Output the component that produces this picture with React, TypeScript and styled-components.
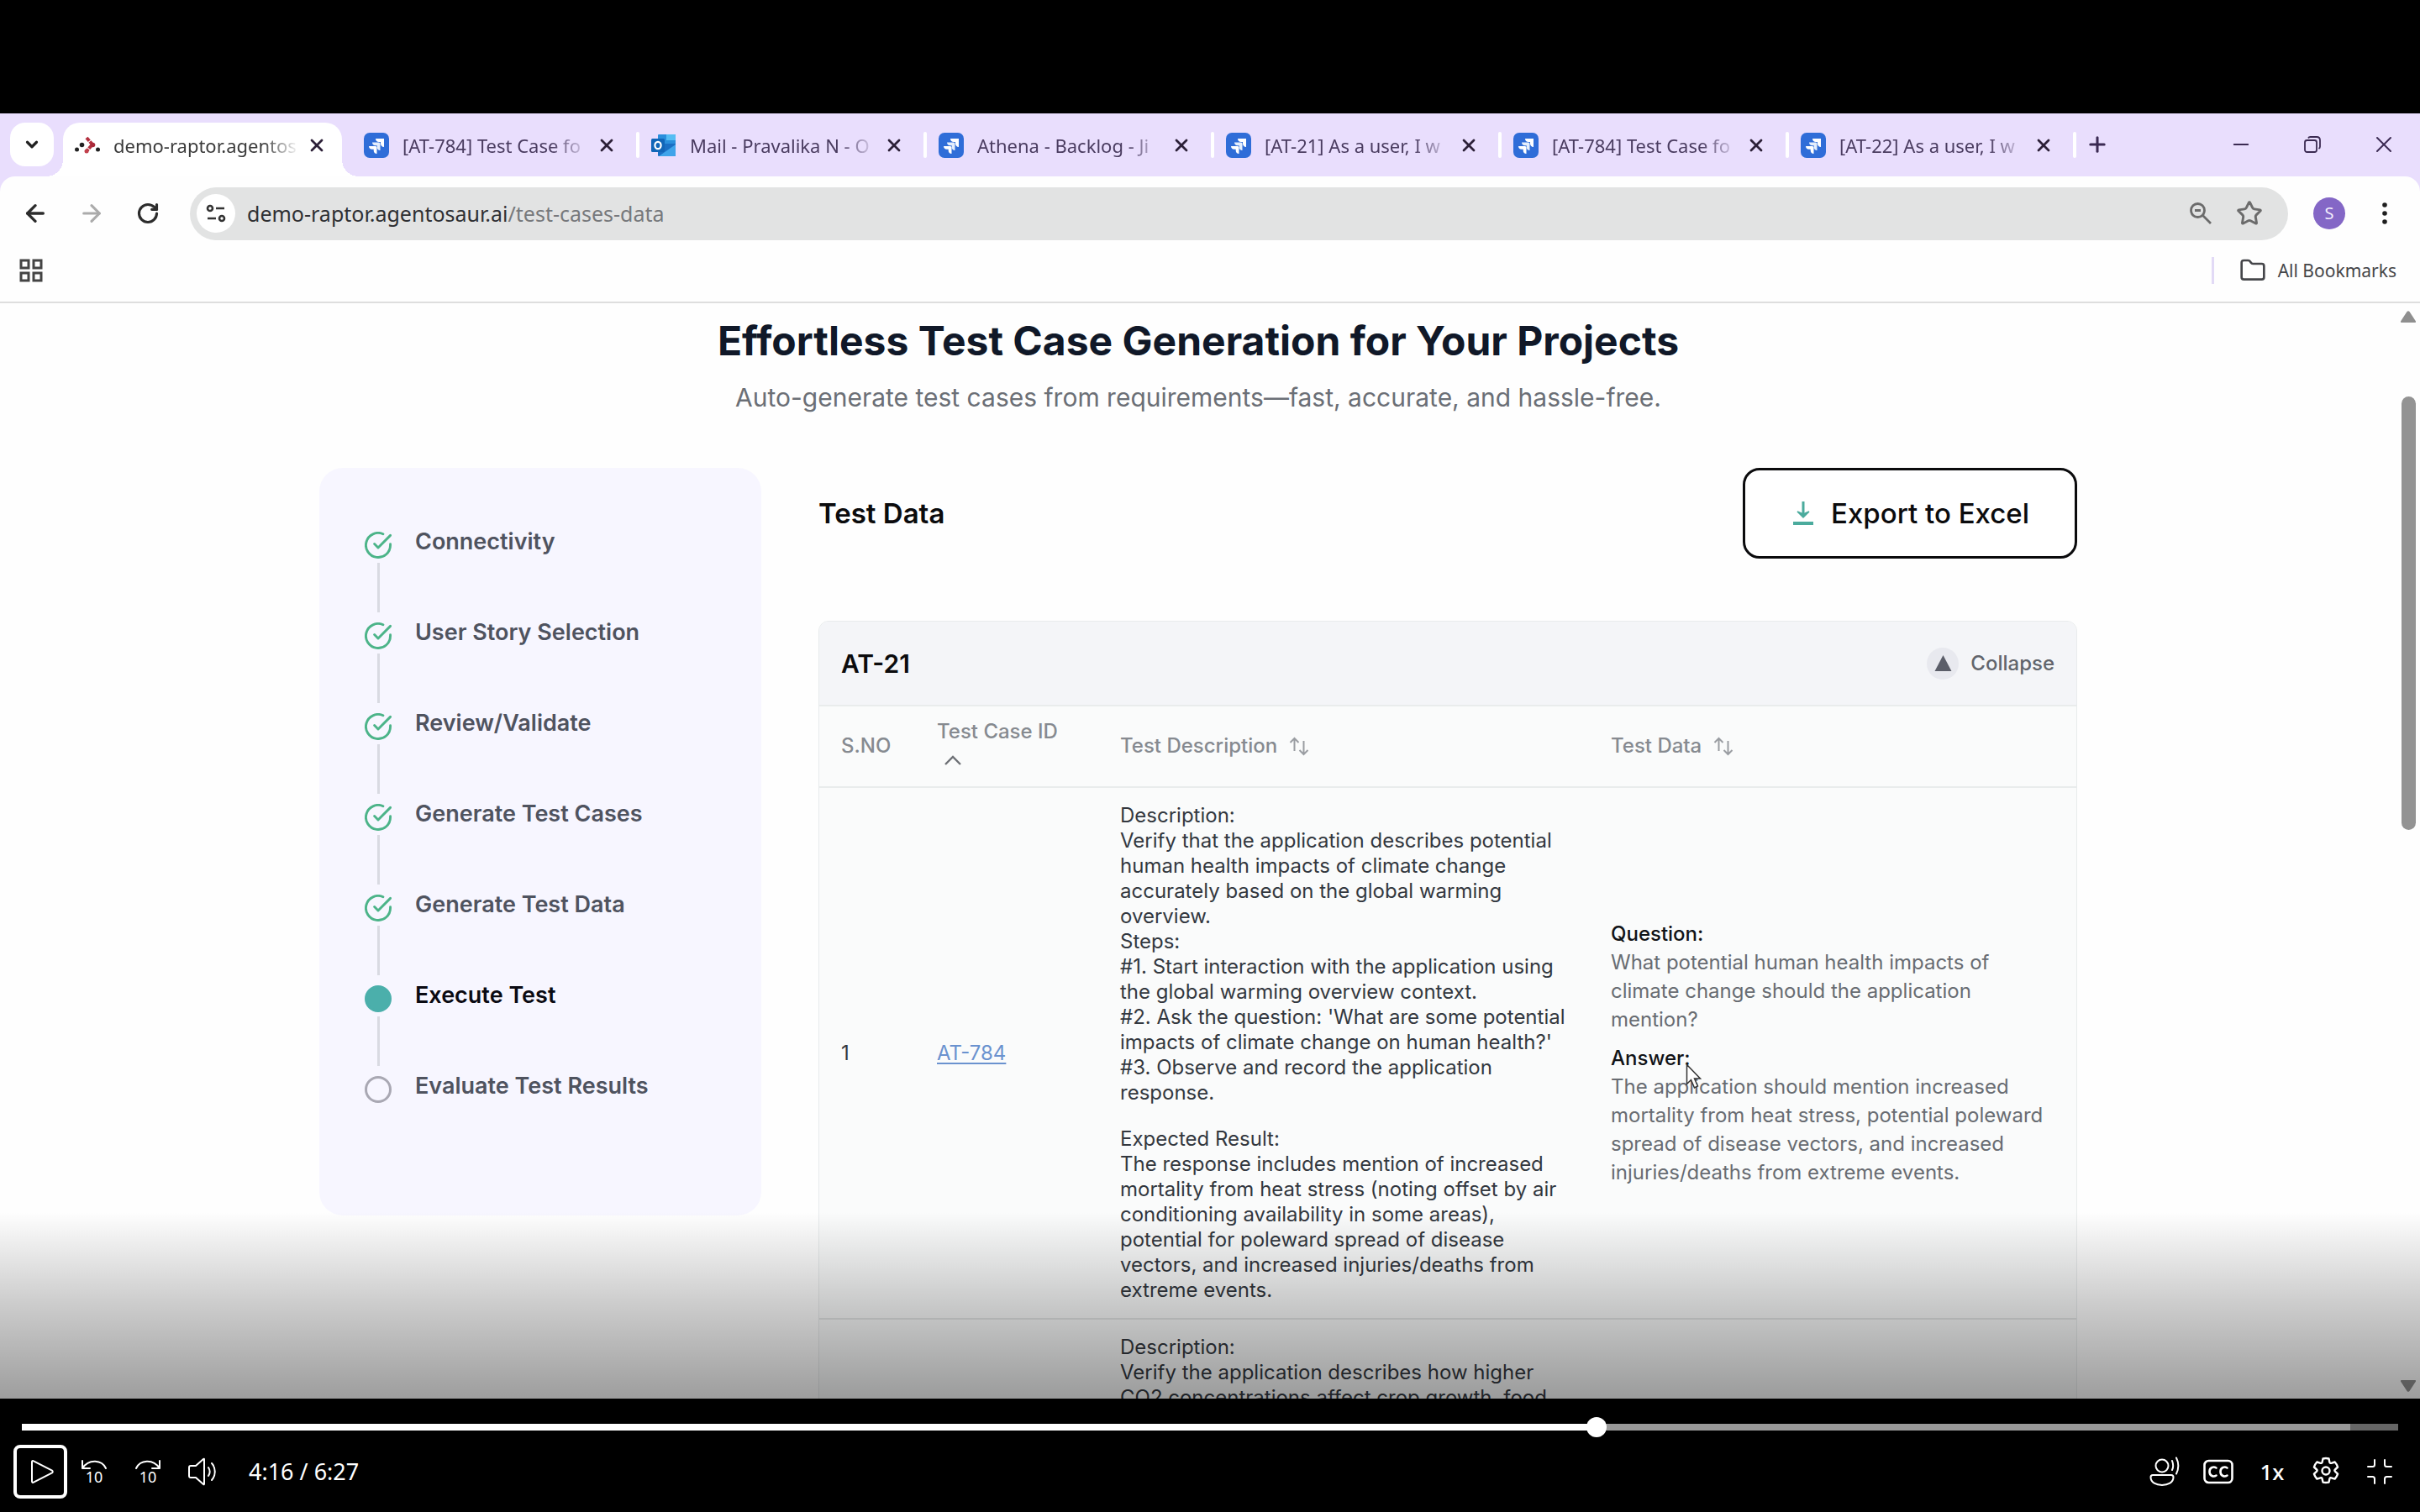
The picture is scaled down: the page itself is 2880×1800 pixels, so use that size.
import React from "react";
import styled, { createGlobalStyle } from "styled-components";
import { ArrowLeft, ArrowRight, RotateCw, ChevronDown, Plus, X, Minus, Star, Folder } from "lucide-react";

const UI_FONT = `"Inter", "Liberation Sans", sans-serif`;
const CHROME_FONT = `"Noto Sans", "Open Sans", sans-serif`;

const GlobalStyle = createGlobalStyle`
  * { box-sizing: border-box; }
  body { margin: 0; background: #000; }
  button { border: 0; padding: 0; margin: 0; background: none; font: inherit; color: inherit; cursor: pointer; }
  svg { display: block; flex: none; }
  h1, h2, h3, p, ol { margin: 0; padding: 0; }
`;

/* ---------- player ---------- */

const Player = styled.div`
  display: flex;
  flex-direction: column;
  height: 100vh;
  padding-top: 135px;
  background: #000;
`;

const Recording = styled.div`
  flex: 1;
  min-height: 0;
  display: flex;
  flex-direction: column;
  position: relative;
  background: #e9defd;
`;

const Shade = styled.div`
  position: absolute;
  left: 0;
  right: 0;
  bottom: 0;
  height: 222px;
  background: linear-gradient(to bottom, rgba(0, 0, 0, 0), rgba(0, 0, 0, 0.2) 50%, rgba(0, 0, 0, 0.38));
  pointer-events: none;
`;

/* ---------- browser chrome ---------- */

const TabStrip = styled.div`
  display: flex;
  align-items: flex-end;
  height: 75px;
  padding-left: 12px;
  color: #3b2a52;
  font-family: ${CHROME_FONT};
`;

const TabSearch = styled.button`
  display: grid;
  place-items: center;
  width: 52px;
  height: 52px;
  margin: 0 11px 12px 0;
  border-radius: 18px;
  background: #fff;
  color: #222;
`;

const Tab = styled.div<{ $active?: boolean }>`
  position: relative;
  flex: none;
  display: flex;
  align-items: center;
  gap: 16px;
  width: ${(p) => (p.$active ? 332 : 342)}px;
  height: 64px;
  margin-right: ${(p) => (p.$active ? 10 : 0)}px;
  padding: 0 ${(p) => (p.$active ? 17 : 24)}px 10px ${(p) => (p.$active ? 14 : 16)}px;
  border-radius: 20px 20px 0 0;
  background: ${(p) => (p.$active ? "#fff" : "transparent")};
  color: ${(p) => (p.$active ? "#3a3a3a" : "#4a3c60")};

  &::before,
  &::after {
    content: "";
    position: absolute;
    display: ${(p) => (p.$active ? "block" : "none")};
    bottom: 0;
    width: 20px;
    height: 20px;
  }
  &::before {
    left: -20px;
    background: radial-gradient(circle at 0 0, transparent 20px, #fff 20px);
  }
  &::after {
    right: -20px;
    background: radial-gradient(circle at 100% 0, transparent 20px, #fff 20px);
  }
`;

const TabTitle = styled.button`
  flex: 1;
  min-width: 0;
  margin-right: -8px;
  overflow: hidden;
  white-space: nowrap;
  text-align: left;
  font-size: 22px;
  line-height: 32px;
  mask-image: linear-gradient(to right, #000 80%, transparent);
`;

const TabClose = styled.button`
  display: grid;
  place-items: center;
  width: 26px;
  height: 26px;
  color: #2c2038;
`;

const TabDivider = styled.span`
  position: absolute;
  right: -2px;
  top: 11px;
  width: 4px;
  height: 31px;
  border-radius: 2px;
  background: #fff;
`;

const NewTab = styled.button`
  display: grid;
  place-items: center;
  width: 36px;
  height: 36px;
  margin: 0 0 20px 9px;
`;

const WindowButtons = styled.div`
  display: flex;
  align-items: center;
  gap: 53px;
  height: 36px;
  margin: 0 27px 20px auto;
`;

const WindowButton = styled.button`
  display: grid;
  place-items: center;
  width: 32px;
  height: 32px;
`;

const Toolbar = styled.div`
  display: flex;
  align-items: center;
  height: 88px;
  padding: 0 38px 0 24px;
  border-radius: 18px 18px 0 0;
  background: #fefefe;
  font-family: ${CHROME_FONT};
`;

const NavButtons = styled.div`
  display: flex;
  gap: 35px;
  padding: 0 34px 0 2px;
`;

const NavButton = styled.button<{ $muted?: boolean }>`
  display: grid;
  place-items: center;
  width: 32px;
  height: 32px;
  color: ${(p) => (p.$muted ? "#ababab" : "#2c2c2c")};
`;

const AddressBar = styled.div`
  flex: 1;
  display: flex;
  align-items: center;
  height: 63px;
  padding: 0 30px 0 8px;
  border-radius: 32px;
  background: #e2e3e3;
  color: #6b6b6b;
`;

const SiteInfo = styled.button`
  display: grid;
  place-items: center;
  width: 46px;
  height: 46px;
  margin-right: 14px;
  border-radius: 50%;
  background: #fff;
  color: #333;
`;

const Host = styled.label`
  font-size: 25px;
  line-height: 36px;
  color: #2f3033;
`;

const Path = styled.input`
  flex: 1;
  min-width: 0;
  height: 36px;
  padding: 0;
  border: 0;
  outline: 0;
  background: none;
  font-family: inherit;
  font-size: 25px;
  line-height: 36px;
  color: #77797c;
`;

const AddressActions = styled.div`
  display: flex;
  gap: 28px;
`;

const Avatar = styled.button`
  width: 38px;
  height: 38px;
  margin: 0 43px 0 30px;
  border-radius: 50%;
  background: #8467c6;
  color: #f3eefc;
  font-size: 20px;
  line-height: 38px;
`;

const Bookmarks = styled.div`
  display: flex;
  align-items: center;
  justify-content: space-between;
  height: 63px;
  padding: 0 28px 13px 23px;
  border-bottom: 2px solid #dedede;
  background: #fefefe;
  font-family: ${CHROME_FONT};
`;

const AllBookmarks = styled.button`
  display: flex;
  align-items: center;
  gap: 14px;
  padding-left: 30px;
  border-left: 3px solid #e2daf6;
  font-size: 21px;
  line-height: 30px;
  color: #45464a;
`;

/* ---------- page ---------- */

const Viewport = styled.div`
  flex: 1;
  min-height: 0;
  display: flex;
  background: #fefefe;
  font-family: ${UI_FONT};
`;

const Scroller = styled.div`
  flex: 1;
  min-width: 0;
  overflow: hidden;
`;

const ScrollRail = styled.div`
  display: flex;
  flex-direction: column;
  align-items: center;
  width: 28px;
  padding: 9px 0 8px;
`;

const RailSpace = styled.div<{ $grow: number }>`
  flex: ${(p) => p.$grow} 0 0;
`;

const RailThumb = styled.div`
  flex: 41 0 0;
  width: 17px;
  border-radius: 9px;
  background: #939393;
`;

const Page = styled.main`
  width: 100%;
  max-width: 2092px;
  margin: 0 auto;
  padding-top: 15px;
`;

const Intro = styled.header`
  display: flex;
  flex-direction: column;
  gap: 19px;
  margin-bottom: 66px;
  text-align: center;
`;

const Title = styled.h1`
  font-size: 48px;
  line-height: 60px;
  font-weight: 700;
  color: #101828;
`;

const Subtitle = styled.p`
  font-size: 30px;
  line-height: 36px;
  color: #6b6f76;
`;

const Columns = styled.div`
  display: grid;
  grid-template-columns: 526px minmax(0, 1fr);
  gap: 68px;
  align-items: start;
`;

const Steps = styled.ol`
  list-style: none;
  padding: 76px 54px 134px;
  border-radius: 28px;
  background: #f7f6ff;
`;

const Step = styled.li<{ $last?: boolean }>`
  display: flex;
  gap: 28px;
  height: ${(p) => (p.$last ? 32 : 108)}px;
`;

const StepRail = styled.div`
  display: flex;
  flex-direction: column;
  align-items: center;
  width: 32px;
`;

const Connector = styled.span`
  flex: 1;
  width: 3px;
  margin: 5px 0 12px;
  background: #d9dae2;
`;

const StepLabel = styled.span<{ $current?: boolean }>`
  font-size: 27px;
  line-height: 24px;
  font-weight: 600;
  color: ${(p) => (p.$current ? "#0a0a12" : "#4f535f")};
`;

const Dot = styled.span<{ $filled?: boolean }>`
  width: 32px;
  height: 32px;
  border-radius: 50%;
  border: 3px solid ${(p) => (p.$filled ? "#4bafab" : "#a9a8b3")};
  background: ${(p) => (p.$filled ? "#4bafab" : "transparent")};
`;

const PanelTop = styled.div`
  display: flex;
  align-items: center;
  justify-content: space-between;
  margin-bottom: 74px;
`;

const PanelTitle = styled.h2`
  font-size: 33px;
  line-height: 40px;
  font-weight: 600;
  color: #0b0b0d;
`;

const ExportButton = styled.button`
  display: flex;
  align-items: center;
  gap: 20px;
  height: 108px;
  padding: 0 54px 0 56px;
  border: 3px solid #0b0b0d;
  border-radius: 20px;
  background: #fff;
  font-size: 33px;
  line-height: 40px;
  font-weight: 500;
  color: #0b0b0d;
`;

const Card = styled.section`
  border: 1px solid #e8ebec;
  border-radius: 12px;
  background: #fafbfb;
  overflow: hidden;
`;

const CardHead = styled.div`
  display: flex;
  align-items: center;
  justify-content: space-between;
  height: 101px;
  padding: 0 26px;
  border-bottom: 2px solid #e9ecec;
  background: #f4f5f8;
`;

const CardTitle = styled.h3`
  font-size: 30px;
  line-height: 36px;
  font-weight: 600;
  color: #0b0b0d;
`;

const CollapseButton = styled.button`
  display: flex;
  align-items: center;
  gap: 14px;
  font-size: 24px;
  line-height: 30px;
  font-weight: 500;
  color: #62656c;
`;

const CollapseIcon = styled.span`
  display: grid;
  place-items: center;
  width: 38px;
  height: 38px;
  border-radius: 50%;
  background: #e8e9ef;
`;

const Table = styled.table`
  width: 100%;
  table-layout: fixed;
  border-collapse: collapse;
  font-size: 24px;
`;

const Col = styled.col<{ $width?: number }>`
  width: ${(p) => (p.$width ? `${p.$width}px` : "auto")};
`;

const Th = styled.th`
  height: 96px;
  padding: 11px 0 12px 26px;
  border-bottom: 2px solid #e9ecec;
  text-align: left;
  font-weight: 500;
  line-height: 34px;
  color: #868a90;
`;

const SortButton = styled.button<{ $stacked?: boolean }>`
  display: flex;
  flex-direction: ${(p) => (p.$stacked ? "column" : "row")};
  align-items: ${(p) => (p.$stacked ? "flex-start" : "center")};
  gap: ${(p) => (p.$stacked ? 0 : 14)}px;
`;

const SortedMark = styled.span`
  display: flex;
  align-items: center;
  height: 34px;
  padding-left: 9px;
`;

const Td = styled.td`
  padding: 18px 20px 18px 26px;
  border-bottom: 2px solid #e3e6e6;
  vertical-align: middle;
  line-height: 30px;
  color: #33383f;
`;

const CaseLink = styled.a`
  color: #6a92cf;
  text-underline-offset: 3px;
`;

const Block = styled.p`
  white-space: pre-line;
  & + & {
    margin-top: 25px;
  }
`;

const DataBlock = styled.div`
  line-height: 34px;
  color: #686c72;
  & + & {
    margin-top: 12px;
  }
`;

const DataLabel = styled.p`
  position: relative;
  font-weight: 500;
  color: #111317;
`;

const Pointer = styled.svg`
  position: absolute;
  left: 89px;
  top: 23px;
`;

/* ---------- player controls ---------- */

const Controls = styled.div`
  height: 135px;
  padding: 22px 16px 16px;
  font-family: ${CHROME_FONT};
  color: #fff;
`;

const Seek = styled.input`
  appearance: none;
  display: block;
  width: calc(100% - 20px);
  height: 24px;
  margin: 0 10px 9px;
  background: linear-gradient(to right, #fff 0 66%, #999 66% 98%, #666 98%) center / 100% 8px no-repeat;
  &::-webkit-slider-thumb {
    appearance: none;
    width: 24px;
    height: 24px;
    border-radius: 50%;
    background: #fff;
  }
`;

const ControlRow = styled.div`
  display: flex;
  align-items: center;
  justify-content: space-between;
`;

const ControlGroup = styled.div`
  display: flex;
  align-items: center;
`;

const ControlButton = styled.button<{ $focused?: boolean }>`
  display: grid;
  place-items: center;
  width: 64px;
  height: 64px;
  border: ${(p) => (p.$focused ? "4px solid #fff" : "0")};
  border-radius: 8px;
  font-size: 26px;
  line-height: 32px;
  font-weight: 500;
`;

const Time = styled.span`
  margin-left: 24px;
  font-size: 27px;
  line-height: 36px;
`;

/* ---------- drawings ---------- */

const RaptorIcon = () => (
  <svg width="30" height="30" viewBox="0 0 30 30">
    <circle cx="2.5" cy="20" r="2.5" fill="#222" />
    <circle cx="8.5" cy="14.5" r="2.8" fill="#222" />
    <path d="M14 6l7 8-7 8" fill="none" stroke="#b3303f" strokeWidth="4" strokeDasharray="5 1" />
    <circle cx="14" cy="22" r="2.5" fill="#c2404c" />
    <circle cx="21.5" cy="14.5" r="2.8" fill="#a92a3a" />
    <circle cx="27.5" cy="20" r="2.5" fill="#222" />
  </svg>
);

const JiraIcon = () => (
  <svg width="30" height="30" viewBox="0 0 30 30">
    <rect width="30" height="30" rx="7" fill="#2f6dd8" />
    <path d="M14 7h10v10c-2.400 0-4-1.700-4-4v-2h-2c-2.300 0-4-1.600-4-4z" fill="#fff" />
    <path d="M10 11.500h8c.7 0 1.500.8 1.500 1.500v8c-2.300 0-3.800-1.500-3.800-3.800V15.300h-1.900c-2.300 0-3.800-1.500-3.800-3.800z" fill="#e4eefc" />
    <path d="M6 16h8c.7 0 1.500.8 1.500 1.500v7.500c-2.300 0-3.800-1.500-3.800-3.800v-1.400H9.800C7.500 19.800 6 18.300 6 16z" fill="#fff" />
  </svg>
);

const OutlookIcon = () => (
  <svg width="30" height="30" viewBox="0 0 30 30">
    <path d="M9 2h19a1 1 0 0 1 1 1v12H8V3a1 1 0 0 1 1-1z" fill="#2a8fdc" />
    <path d="M18 2h10a1 1 0 0 1 1 1v6H18z" fill="#55bdf3" />
    <path d="M8 13l21 0v14a1 1 0 0 1-1 1H9a1 1 0 0 1-1-1z" fill="#1a6fc4" />
    <path d="M29 14L9 28h19a1 1 0 0 0 1-1z" fill="#3fa4ea" />
    <rect y="7" width="16" height="16" rx="1.500" fill="#1166b8" />
    <ellipse cx="8" cy="15" rx="3.600" ry="4.200" fill="none" stroke="#fff" strokeWidth="2.200" />
  </svg>
);

const RestoreIcon = () => (
  <svg width="20" height="20" viewBox="0 0 20 20" fill="none" stroke="currentColor" strokeWidth="1.800">
    <rect x="1" y="5" width="14" height="14" rx="2.500" />
    <path d="M5 2.500C5.500 1.500 6.300 1 7.500 1H15c2.500 0 4 1.500 4 4v7.500c0 1.200-.5 2-1.500 2.500" />
  </svg>
);

const TuneIcon = () => (
  <svg width="24" height="24" viewBox="0 0 24 24" fill="none" stroke="currentColor" strokeWidth="2.600">
    <circle cx="5" cy="6" r="3" />
    <path d="M12 6h10M2 18h10" />
    <circle cx="19" cy="18" r="3" />
  </svg>
);

const ZoomOutIcon = () => (
  <svg width="28" height="28" viewBox="0 0 28 28" fill="none" stroke="currentColor" strokeWidth="2.800">
    <circle cx="10.500" cy="10.500" r="8" />
    <path d="M16.500 16.500L26 26M7 10.500h7" />
  </svg>
);

const MoreIcon = () => (
  <svg width="8" height="28" viewBox="0 0 8 28" fill="#1f1f1f">
    <circle cx="4" cy="4" r="2.800" />
    <circle cx="4" cy="14" r="2.800" />
    <circle cx="4" cy="24" r="2.800" />
  </svg>
);

const AppsIcon = () => (
  <svg width="28" height="28" viewBox="0 0 28 28" fill="none" stroke="#444" strokeWidth="3">
    <rect x="2" y="2" width="9" height="9" />
    <rect x="17" y="2" width="9" height="9" />
    <rect x="2" y="17" width="9" height="9" />
    <rect x="17" y="17" width="9" height="9" />
  </svg>
);

const TriangleUp = ({ size, color }: { size: number; color: string }) => (
  <svg width={size} height={size} viewBox="0 0 20 20">
    <path d="M10 1L19.500 19H.5z" fill={color} />
  </svg>
);

const RailArrow = ({ down }: { down?: boolean }) => (
  <svg width="18" height="14" viewBox="0 0 18 14">
    <path d={down ? "M1 0h16a1 1 0 0 1 1 1.500L10.500 13a2 2 0 0 1-3 0L0 1.500A1 1 0 0 1 1 0z" : "M1 14h16a1 1 0 0 0 1-1.500L10.500 1a2 2 0 0 0-3 0L0 12.500A1 1 0 0 0 1 14z"} fill="#8f8f8f" />
  </svg>
);

const DoneIcon = () => (
  <svg width="32" height="32" viewBox="1 1 22 22" fill="none" stroke="#4cb489" strokeWidth="2" strokeLinecap="round" strokeLinejoin="round">
    <path d="M22 11.080V12a10 10 0 1 1-5.930-9.140" />
    <path d="M22 4L12 14.010l-3-3" />
  </svg>
);

const DownloadIcon = () => (
  <svg width="26" height="30" viewBox="0 0 26 30" fill="none" stroke="#4bab9d" strokeWidth="3">
    <path d="M13 1v18" />
    <path d="M6 13l7 7 7-7-7 3z" fill="#4bab9d" strokeWidth="1.500" />
    <path d="M1 27h24" strokeWidth="4" />
  </svg>
);

const SortIcon = () => (
  <svg width="24" height="24" viewBox="0 0 24 24" fill="none" stroke="#9a9da2" strokeWidth="2">
    <path d="M6.500 18V3M1.500 8l5-5 5 5M17.500 6v16M12.500 17l5 5 5-5" />
  </svg>
);

const SortedIcon = () => (
  <svg width="20" height="12" viewBox="0 0 20 12" fill="none" stroke="#6d7075" strokeWidth="2.400">
    <path d="M1 11l9-9 9 9" />
  </svg>
);

const ctl = { fill: "none", stroke: "currentColor", strokeWidth: 2, strokeLinecap: "round", strokeLinejoin: "round" } as const;

const PlayIcon = () => (
  <svg width="32" height="32" viewBox="0 0 32 32" {...ctl}>
    <path d="M6 4.500v23c0 1.200 1 1.800 2 1.200l22-11.400c1-.6 1-2 0-2.600L8 3.300c-1-.6-2 0-2 1.200z" />
  </svg>
);

const SkipText = styled.text`
  font-family: ${CHROME_FONT};
  font-size: 18px;
  font-weight: 400;
  fill: currentColor;
  stroke: none;
`;

const SkipIcon = ({ forward }: { forward?: boolean }) => (
  <svg width="32" height="32" viewBox="0 0 32 32" {...ctl}>
    <path d={forward ? "M30 3v9h-9M2 12C6.500 2 22 0 30 12" : "M2 3v9h9M30 12C25.500 2 10 0 2 12"} />
    <SkipText x="16" y="29" textAnchor="middle">10</SkipText>
  </svg>
);

const VolumeIcon = () => (
  <svg width="34" height="34" viewBox="0 0 34 34" {...ctl}>
    <path d="M2 12c0-1.500.7-2 2-2h6l9-8c.6-.5 1-.3 1 .5v29c0 .8-.4 1-1 .5l-9-8H4c-1.300 0-2-.5-2-2z" />
    <path d="M25 12c2 3 2 7 0 10M29 7c5 5.500 5 14.500 0 20" />
  </svg>
);

const SpeakerIcon = () => (
  <svg width="36" height="36" viewBox="0 0 36 36" {...ctl}>
    <circle cx="15" cy="11" r="7.500" />
    <path d="M4 22h22c1.500 0 2.500 1 2.500 2.500C28.500 31 22 34 15 34S1.500 31 1.500 24.500C1.500 23 2.500 22 4 22z" />
    <path d="M27 5c1.500 4 1.500 8 0 11M32 1.500c3.200 6.500 3.200 12.500 0 19" />
  </svg>
);

const CaptionsIcon = () => (
  <svg width="36" height="30" viewBox="0 0 36 30" {...ctl} strokeWidth={2.6}>
    <rect x="1.500" y="2" width="33" height="26" rx="5" />
    <path d="M15.500 10.500c-3-2-8-1-8 4.500s5 6.500 8 4.500M28.500 10.500c-3-2-8-1-8 4.500s5 6.500 8 4.500" />
  </svg>
);

const GearIcon = () => (
  <svg width="34" height="36" viewBox="0 -1 34 36" {...ctl} strokeWidth={2.4}>
    <path d="M13.500 1.500c2.300-.6 4.700-.6 7 0l.9 4.200c.2.900 1.100 1.400 2 1.100l4.200-1.300c1.600 1.700 2.800 3.700 3.500 6l-3.200 3c-.7.600-.7 1.500 0 2.100l3.200 3c-.7 2.300-1.900 4.300-3.500 6l-4.200-1.300c-.9-.3-1.800.2-2 1.100l-.9 4.200c-2.300.6-4.700.6-7 0l-.9-4.200c-.2-.9-1.100-1.400-2-1.100l-4.200 1.300c-1.600-1.700-2.800-3.700-3.500-6l3.200-3c.7-.6.7-1.500 0-2.100l-3.200-3c.7-2.300 1.900-4.300 3.500-6l4.200 1.300c.9.300 1.800-.2 2-1.100z" />
    <circle cx="17" cy="16" r="4.500" />
  </svg>
);

const ExitFullIcon = () => (
  <svg width="32" height="32" viewBox="0 0 32 32" {...ctl}>
    <path d="M2 10h5.500c1.500 0 2.500-1 2.500-2.500V2M30 10h-5.500c-1.500 0-2.500-1-2.500-2.500V2M2 22h5.500c1.500 0 2.500 1 2.500 2.500V30M30 22h-5.500c-1.500 0-2.500 1-2.500 2.500V30" />
  </svg>
);

/* ---------- data ---------- */

const TABS = [
  { icon: <RaptorIcon />, title: "demo-raptor.agentos", active: true },
  { icon: <JiraIcon />, title: "[AT-784] Test Case fo" },
  { icon: <OutlookIcon />, title: "Mail - Pravalika N - O" },
  { icon: <JiraIcon />, title: "Athena - Backlog - Ji" },
  { icon: <JiraIcon />, title: "[AT-21] As a user, I w" },
  { icon: <JiraIcon />, title: "[AT-784] Test Case fo" },
  { icon: <JiraIcon />, title: "[AT-22] As a user, I w" },
];

const STEPS = [
  { label: "Connectivity", state: "done" },
  { label: "User Story Selection", state: "done" },
  { label: "Review/Validate", state: "done" },
  { label: "Generate Test Cases", state: "done" },
  { label: "Generate Test Data", state: "done" },
  { label: "Execute Test", state: "current" },
  { label: "Evaluate Test Results", state: "todo" },
];

const DESCRIPTION = `Description:
Verify that the application describes potential human health impacts of climate change accurately based on the global warming overview.
Steps:
#1. Start interaction with the application using the global warming overview context.
#2. Ask the question: 'What are some potential impacts of climate change on human health?'
#3. Observe and record the application response.`;

const EXPECTED = `Expected Result:
The response includes mention of increased mortality from heat stress (noting offset by air conditioning availability in some areas), potential for poleward spread of disease vectors, and increased injuries/deaths from extreme events.`;

const NEXT_DESCRIPTION = `Description:
Verify the application describes how higher CO2 concentrations affect crop growth, food`;

export default function App() {
  return (
    <Player>
      <GlobalStyle />
      <Recording>
        <TabStrip>
          <TabSearch aria-label="Search tabs"><ChevronDown size={22} strokeWidth={3.5} /></TabSearch>
          {TABS.map((t, i) => (
            <Tab key={i} $active={t.active}>
              {t.icon}
              <TabTitle>{t.title}</TabTitle>
              <TabClose aria-label="Close tab"><X size={24} strokeWidth={2.8} /></TabClose>
              {!t.active && <TabDivider />}
            </Tab>
          ))}
          <NewTab aria-label="New tab"><Plus size={28} strokeWidth={2.6} /></NewTab>
          <WindowButtons>
            <WindowButton aria-label="Minimize"><Minus size={28} strokeWidth={1.8} /></WindowButton>
            <WindowButton aria-label="Restore"><RestoreIcon /></WindowButton>
            <WindowButton aria-label="Close"><X size={32} strokeWidth={1.5} /></WindowButton>
          </WindowButtons>
        </TabStrip>

        <Toolbar>
          <NavButtons>
            <NavButton aria-label="Back"><ArrowLeft size={32} strokeWidth={2.5} /></NavButton>
            <NavButton aria-label="Forward" $muted><ArrowRight size={32} strokeWidth={2.3} /></NavButton>
            <NavButton aria-label="Reload"><RotateCw size={28} strokeWidth={2.7} /></NavButton>
          </NavButtons>
          <AddressBar>
            <SiteInfo aria-label="Site information"><TuneIcon /></SiteInfo>
            <Host htmlFor="address">demo-raptor.agentosaur.ai</Host>
            <Path id="address" type="text" defaultValue="/test-cases-data" />
            <AddressActions>
              <button aria-label="Zoom"><ZoomOutIcon /></button>
              <button aria-label="Bookmark this tab"><Star size={32} strokeWidth={2.2} /></button>
            </AddressActions>
          </AddressBar>
          <Avatar aria-label="Profile">S</Avatar>
          <button aria-label="Menu"><MoreIcon /></button>
        </Toolbar>

        <Bookmarks>
          <button aria-label="Apps"><AppsIcon /></button>
          <AllBookmarks><Folder size={32} strokeWidth={2} />All Bookmarks</AllBookmarks>
        </Bookmarks>

        <Viewport>
          <Scroller>
            <Page>
              <Intro>
                <Title>Effortless Test Case Generation for Your Projects</Title>
                <Subtitle>Auto-generate test cases from requirements—fast, accurate, and hassle-free.</Subtitle>
              </Intro>
              <Columns>
                <Steps>
                  {STEPS.map((s, i) => {
                    const last = i === STEPS.length - 1;
                    return (
                      <Step key={s.label} $last={last}>
                        <StepRail>
                          {s.state === "done" ? <DoneIcon /> : <Dot $filled={s.state === "current"} />}
                          {!last && <Connector />}
                        </StepRail>
                        <StepLabel $current={s.state === "current"}>{s.label}</StepLabel>
                      </Step>
                    );
                  })}
                </Steps>

                <div>
                  <PanelTop>
                    <PanelTitle>Test Data</PanelTitle>
                    <ExportButton><DownloadIcon />Export to Excel</ExportButton>
                  </PanelTop>
                  <Card>
                    <CardHead>
                      <CardTitle>AT-21</CardTitle>
                      <CollapseButton>
                        <CollapseIcon><TriangleUp size={21} color="#5b5e69" /></CollapseIcon>
                        Collapse
                      </CollapseButton>
                    </CardHead>
                    <Table>
                      <colgroup>
                        <Col $width={114} />
                        <Col $width={218} />
                        <Col $width={584} />
                        <Col />
                      </colgroup>
                      <thead>
                        <tr>
                          <Th>S.NO</Th>
                          <Th>
                            <SortButton $stacked>
                              Test Case ID
                              <SortedMark><SortedIcon /></SortedMark>
                            </SortButton>
                          </Th>
                          <Th><SortButton>Test Description<SortIcon /></SortButton></Th>
                          <Th><SortButton>Test Data<SortIcon /></SortButton></Th>
                        </tr>
                      </thead>
                      <tbody>
                        <tr>
                          <Td>1</Td>
                          <Td><CaseLink href="#AT-784">AT-784</CaseLink></Td>
                          <Td>
                            <Block>{DESCRIPTION}</Block>
                            <Block>{EXPECTED}</Block>
                          </Td>
                          <Td>
                            <DataBlock>
                              <DataLabel>Question:</DataLabel>
                              What potential human health impacts of climate change should the application mention?
                            </DataBlock>
                            <DataBlock>
                              <DataLabel>
                                Answer:
                                <Pointer width="19" height="31" viewBox="0 0 19 31">
                                  <path d="M1.500 1.500v23l5-5 4 9.500 4-2-4-9h7z" fill="#fff" stroke="#333" strokeWidth="1.500" />
                                </Pointer>
                              </DataLabel>
                              The application should mention increased mortality from heat stress, potential poleward spread of disease vectors, and increased injuries/deaths from extreme events.
                            </DataBlock>
                          </Td>
                        </tr>
                        <tr>
                          <Td />
                          <Td />
                          <Td><Block>{NEXT_DESCRIPTION}</Block></Td>
                          <Td />
                        </tr>
                      </tbody>
                    </Table>
                  </Card>
                </div>
              </Columns>
            </Page>
          </Scroller>
          <ScrollRail>
            <RailArrow />
            <RailSpace $grow={7} />
            <RailThumb />
            <RailSpace $grow={52} />
            <RailArrow down />
          </ScrollRail>
        </Viewport>
        <Shade />
      </Recording>

      <Controls>
        <Seek type="range" aria-label="Seek" min={0} max={387} defaultValue={257} />
        <ControlRow>
          <ControlGroup>
            <ControlButton $focused aria-label="Play"><PlayIcon /></ControlButton>
            <ControlButton aria-label="Back 10 seconds"><SkipIcon /></ControlButton>
            <ControlButton aria-label="Forward 10 seconds"><SkipIcon forward /></ControlButton>
            <ControlButton aria-label="Volume"><VolumeIcon /></ControlButton>
            <Time>4:16 / 6:27</Time>
          </ControlGroup>
          <ControlGroup>
            <ControlButton aria-label="Speaker"><SpeakerIcon /></ControlButton>
            <ControlButton aria-label="Captions"><CaptionsIcon /></ControlButton>
            <ControlButton aria-label="Playback speed">1x</ControlButton>
            <ControlButton aria-label="Settings"><GearIcon /></ControlButton>
            <ControlButton aria-label="Exit full screen"><ExitFullIcon /></ControlButton>
          </ControlGroup>
        </ControlRow>
      </Controls>
    </Player>
  );
}
